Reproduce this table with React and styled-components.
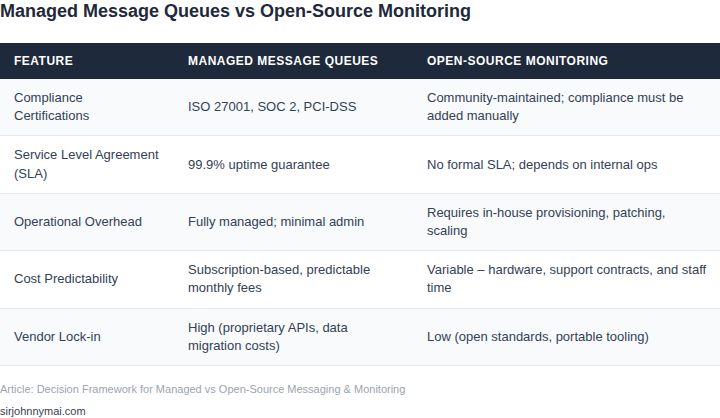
import React from "react";
import styled, { createGlobalStyle } from "styled-components";

const GlobalStyle = createGlobalStyle`
  body {
    margin: 0;
    background: #fff;
    font-family: "Liberation Sans", Arial, sans-serif;
  }
`;

const Page = styled.div`
  width: 720px;
`;

const Title = styled.h2`
  margin: 0 0 21px;
  font-size: 18px;
  line-height: 22px;
  font-weight: 700;
  color: #1e293b;
`;

const Table = styled.table`
  width: 100%;
  border-collapse: collapse;
  table-layout: fixed;
  font-size: 13px;
  color: #334155;
`;

const HeadCell = styled.th`
  width: ${(p) => p.$w || "auto"};
  background: #1e293b;
  color: #fff;
  text-align: left;
  font-size: 12px;
  font-weight: 700;
  text-transform: uppercase;
  letter-spacing: 0.5px;
  padding: 10px 14px;
  line-height: 16px;

  &:last-child {
    padding-right: 12px;
  }
`;

const Row = styled.tr`
  background: ${(p) => (p.$striped ? "#f8fafc" : "#fff")};
  border-bottom: 1px solid #e2e8f0;
`;

const Cell = styled.td`
  padding: 10px 14px;
  line-height: 18.2px;
  height: 36.4px;
  vertical-align: middle;

  &:last-child {
    padding-right: 12px;
  }
`;

const Footer = styled.div`
  padding-top: 13px;
  font-size: 11px;
`;

const Source = styled.div`
  color: #9ca3af;
  line-height: 20px;
`;

const Site = styled.div`
  color: #374151;
  line-height: 16px;
  margin-top: 4px;
`;

const rows = [
  ["Compliance Certifications", "ISO 27001, SOC 2, PCI-DSS", "Community-maintained; compliance must be added manually"],
  ["Service Level Agreement (SLA)", "99.9% uptime guarantee", "No formal SLA; depends on internal ops"],
  ["Operational Overhead", "Fully managed; minimal admin", "Requires in-house provisioning, patching, scaling"],
  ["Cost Predictability", "Subscription-based, predictable monthly fees", "Variable – hardware, support contracts, and staff time"],
  ["Vendor Lock-in", "High (proprietary APIs, data migration costs)", "Low (open standards, portable tooling)"],
];

export default function App() {
  return (
    <Page>
      <GlobalStyle />
      <Title>Managed Message Queues vs Open-Source Monitoring</Title>
      <Table>
        <thead>
          <tr>
            <HeadCell $w="146px">Feature</HeadCell>
            <HeadCell $w="211px">Managed Message Queues</HeadCell>
            <HeadCell>Open-Source Monitoring</HeadCell>
          </tr>
        </thead>
        <tbody>
          {rows.map((r, i) => (
            <Row key={r[0]} $striped={i % 2 === 0}>
              {r.map((c) => (
                <Cell key={c}>{c}</Cell>
              ))}
            </Row>
          ))}
        </tbody>
      </Table>
      <Footer>
        <Source>Article: Decision Framework for Managed vs Open-Source Messaging &amp; Monitoring</Source>
        <Site>sirjohnnymai.com</Site>
      </Footer>
    </Page>
  );
}
